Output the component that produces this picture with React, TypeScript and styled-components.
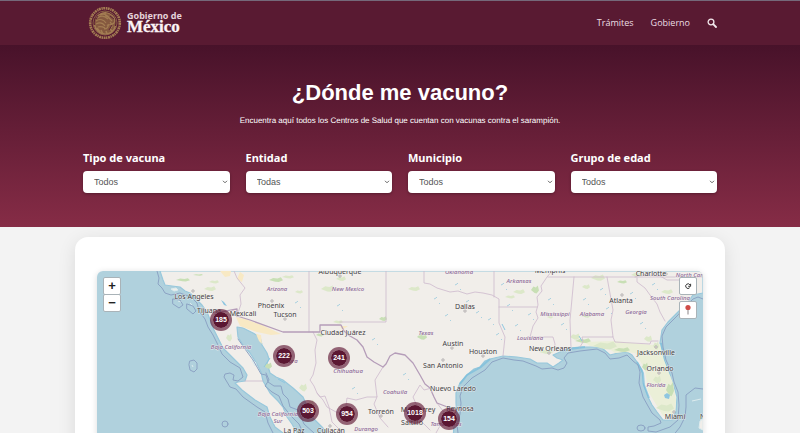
import React from "react";
import styled, { createGlobalStyle } from "styled-components";

const GlobalStyle = createGlobalStyle`
  * { box-sizing: border-box; }
  body {
    margin: 0;
    background: #f3f3f3;
    font-family: "Liberation Sans", Arial, sans-serif;
  }
`;

const Header = styled.header`
  display: flex;
  align-items: center;
  justify-content: space-between;
  height: 45px;
  padding: 0 83px 0 88px;
  background: #591a32;
  border-top: 1px solid #75697a;
`;

const Brand = styled.a`
  display: flex;
  align-items: center;
  gap: 5px;
  color: #fbf3f5;
  text-decoration: none;
`;

const BrandText = styled.span`
  display: flex;
  flex-direction: column;
`;

const BrandTop = styled.span`
  font: 700 9px/8px "Noto Sans", sans-serif;
  color: #e5d3da;
`;

const BrandName = styled.span`
  font: 700 17px/14px "Liberation Serif", serif;
  -webkit-text-stroke: 0.3px currentColor;
`;

const Nav = styled.nav`
  display: flex;
  align-items: center;
  gap: 17px;
`;

const NavLink = styled.a`
  font: 400 9px/14px "Open Sans", "Noto Sans", sans-serif;
  color: #ecdfe4;
  text-decoration: none;
`;

const SearchButton = styled.button`
  display: flex;
  padding: 0;
  border: 0;
  background: none;
  color: #f3e9ed;
`;

const Hero = styled.section`
  height: 182px;
  padding: 33px 83px 0;
  background: linear-gradient(#48122a, #862c46);
  color: #fff;
  text-align: center;
`;

const Title = styled.h1`
  margin: 0;
  font-size: 22px;
  line-height: 30px;
`;

const Lead = styled.p`
  margin: 7px 0 23px;
  font-size: 8px;
  line-height: 12px;
  text-rendering: geometricPrecision;
`;

const Filters = styled.form`
  display: grid;
  grid-template-columns: repeat(4, 1fr);
  gap: 16px;
  text-align: left;
`;

const Field = styled.div`
  display: flex;
  flex-direction: column;
  gap: 5px;
`;

const FieldLabel = styled.label`
  font: 700 11px/16px "Noto Sans", sans-serif;
`;

const SelectBox = styled.div`
  display: grid;
  align-items: center;

  > * { grid-area: 1 / 1; }
  > svg {
    justify-self: end;
    margin-right: 2px;
    pointer-events: none;
  }
`;

const Select = styled.select`
  appearance: none;
  width: 100%;
  height: 22px;
  padding: 0 11px;
  border: 0;
  border-radius: 4px;
  background: #fff;
  color: #555;
  font: 400 9px/12px "Liberation Sans", Arial, sans-serif;
  box-shadow: 0 1px 3px rgba(0, 0, 0, 0.3);
`;

const Card = styled.main`
  margin: 10px 75px 24px;
  padding: 34px 22px 22px;
  border-radius: 13px;
  background: #fff;
  box-shadow: 0 4px 18px rgba(0, 0, 0, 0.1);
`;

const MapFrame = styled.div`
  position: relative;
  overflow: hidden;
  border-radius: 6px;
  box-shadow: 0 1px 6px rgba(0, 0, 0, 0.14);

  > svg {
    display: block;
    width: 100%;
    height: auto;
  }
`;

const Cluster = styled.button<{ $x: number; $y: number }>`
  position: absolute;
  left: ${(p) => ((p.$x - 97) / 606) * 100}%;
  top: ${(p) => ((p.$y - 271) / 260) * 100}%;
  width: 22px;
  height: 22px;
  padding: 0;
  transform: translate(-50%, -50%);
  border: 3px solid rgba(97, 24, 54, 0.65);
  border-radius: 50%;
  background: #5b1732;
  background-clip: padding-box;
  color: #fff;
  font: 700 7px/16px "Liberation Sans", Arial, sans-serif;
  white-space: nowrap;
`;

const Controls = styled.div<{ $side: "left" | "right"; $gap: number }>`
  position: absolute;
  top: 6px;
  ${(p) => p.$side}: 6px;
  display: flex;
  flex-direction: column;
  gap: ${(p) => p.$gap}px;
`;

const ControlButton = styled.button`
  display: flex;
  align-items: center;
  justify-content: center;
  width: 18px;
  height: 18px;
  padding: 0;
  border: 1px solid #a9b3b8;
  border-radius: 2px;
  background: #fff;
  color: #222;
  font: 700 13px/16px "Liberation Sans", Arial, sans-serif;

  ${Controls} > & + &[data-joined] { margin-top: -1px; }
`;

const Seal = () => (
  <svg width="34" height="34" viewBox="0 0 34 34" fill="none" stroke="#a37d53" aria-hidden="true">
    <circle cx="17" cy="17" r="14.800" strokeWidth="2.600" strokeDasharray="2 .7 1.3 .5" />
    <circle cx="17" cy="17" r="12" strokeWidth="1" stroke="#8a6046" />
    <circle cx="17" cy="17" r="10.500" fill="#85593f" stroke="none" />
    <path d="M8 12c3-5 9-7 14-4 4 2 6 6 4 9-2 2-5 1-7 3M9 12c4-3 8-2 11 1M8 15c4-3 8-1 10 2M8 18c4-2 7-1 9 2M10 21c3-1 5 0 7 1M12 9c4-2 8 0 10 4M18 6c-2 2-1 4 2 5l4 4M22 16c2 2 3 4 1 6M20 18c1 3-1 5-4 5" strokeWidth="1.200" />
    <path d="M6.500 19c1 5 5 9 10.500 9s9-3 10.500-8M9 22l3 4M13 24l2 4M18 25l1 3M22 23l2 2" strokeWidth="1.600" />
    <path d="M22 10l4 3M10 10l-2 3M24 19l-3 5" stroke="#5e2438" strokeWidth="1" />
  </svg>
);

const landMain =
  "M160 271L163 280 165 285 172 286 180 287 185 291 190 293 195 298 202 305 207 312 211 322 214 330 218 338 223 348 230 355 237 362 243 368 247 375 245 381 238 382 235 383 242 390 255 400 267 407 270 417 275 427 283 433 290 445 300 455 306 448 302 438 297 433 292 424 287 417 283 407 278 401 270 393 263 381 261 372 257 364 250 353 243 345 238 337 237 327 243 328 253 333 260 337 262 345 267 353 269 359 267 363 270 373 276 377 283 380 293 388 303 397 308 408 312 417 322 427 327 433 345 455 370 490 400 531H480L462 480 453 440 454 425 457 417 456 403 456 393 460 383 467 375 474 369 480 367 485 361 490 359 503 356 517 357 530 359 537 363 547 363 553 367 559 363 563 360 557 358 553 355 560 352 570 348 580 347 597 347 602 348 610 355 618 353 627 352 632 355 637 362 642 370 643 383 648 397 652 405 657 412 663 420 672 420 676 412 677 397 674 386 670 377 667 368 663 360 660 343 662 330 668 322 677 313 687 303 693 295 703 293V271Z";

const offshore = [
  "M157 271L159 278 158 284 162 288 165 293 171 295 180 293 191 297 197 303 199 311 205 319 208 327 213 335 218 345 222 354 230 362 240 368 243 377 238 381 233 380 234 375 230 373 225 374 224 377 230 387 236 389 243 397 257 407 265 412 268 423 273 433 280 445 300 465",
  "M458 433L457 425 460 414 461 403 460 396 463 387 472 378 485 370 492 362 503 358 514 360 523 361 536 366 542 369 552 368 558 370 564 368 567 363 564 358 568 353 580 351 597 349 605 353 610 359 619 358 627 355 633 361 638 365 640 372 639 383 643 397 648 406 652 413 660 420 661 423 654 426 648 427 648 431 656 432 670 427 678 420 679 405 678 392 674 382 672 373 666 360 663 347 662 336 666 327 677 316 687 305 693 299 698 297 703 299",
  "M703 389L695 388 686 395 686 407 685 417 680 427 672 437",
  "M238 339L245 349 253 360 261 374 266 375 268 382 274 386 281 386 283 394 288 399 290 407 298 410 304 424 314 433",
  "M266 373L269 380 265 386 272 392 279 396 283 406 291 416 299 424 306 439",
];

const stateLines = [
  "M309 271V332",
  "M386 271V322H340",
  "M234 271L237 278 245 288 240 295 241 304 237 316",
  "M424 271V283L430 284 437 288 450 292 458 291 467 294 475 292 483 293 492 295 499 299V323L505 337 503 356",
  "M494 271V297",
  "M499 307H537",
  "M552 271L547 277 541 286 542 291 537 297 538 305 536 312 538 318 533 326 530 337H553L555 344 554 351",
  "M548 277H703",
  "M574 277L570 320 571 348",
  "M607 277L613 310 611 320 613 337H582L583 342 580 347",
  "M613 337L615 342 650 344 651 341 658 341",
  "M637 278L637 282 645 288 650 295 657 304 660 312 665 321",
  "M635 277L647 275 660 276 667 280 680 280 690 290",
  "M313 332L317 340 315 350 316 363 313 375 310 380 314 386 317 393 323 400 327 407 336 412 345 413 347 398 356 400 367 397 377 397 375 380 383 367",
  "M432 388L424 390 420 385 413 397 417 406 414 411 417 417 430 430",
  "M317 393L320 397 325 396 329 407 332 422 343 433",
  "M377 397L374 404 380 418 388 427",
  "M437 403L446 415 436 433",
  "M245 381H263",
];

const greenAreas = [
  [183, 280, 7, 2], [210, 289, 6, 3], [214, 282, 5, 2], [198, 275, 5, 1], [202, 295, 4, 1],
  [229, 338, 3, 5], [268, 366, 4, 4], [328, 289, 7, 4], [341, 279, 5, 3], [276, 280, 7, 3],
  [288, 277, 6, 2], [299, 292, 4, 2], [383, 319, 4, 3], [338, 322, 5, 2], [414, 289, 6, 3],
  [422, 337, 5, 4], [519, 292, 6, 3], [510, 297, 5, 2], [535, 290, 4, 5], [546, 352, 7, 3],
  [575, 337, 5, 4], [583, 341, 8, 3], [598, 278, 7, 4], [586, 287, 4, 3], [622, 282, 5, 2],
  [637, 275, 6, 3], [605, 346, 12, 5], [622, 350, 8, 3], [648, 339, 4, 4], [656, 346, 3, 5],
  [645, 367, 3, 5], [657, 380, 4, 5], [665, 408, 9, 5], [670, 390, 4, 9], [303, 388, 4, 5],
  [311, 404, 3, 5], [586, 316, 5, 2], [550, 317, 3, 2], [667, 292, 6, 3], [320, 335, 4, 2],
];

const cityLabels: [string, number, number][] = [
  ["Los Angeles", 194, 299], ["Tijuana", 209, 313], ["Mexicali", 243, 316], ["Phoenix", 271, 308],
  ["Tucson", 285, 317], ["Albuquerque", 340, 274], ["Ciudad Juárez", 343, 335], ["Dallas", 465, 309],
  ["Austin", 453, 346], ["Houston", 483, 354], ["San Antonio", 443, 368], ["New Orleans", 550, 351],
  ["Nuevo Laredo", 453, 391], ["Reynosa", 460, 411], ["Torreón", 381, 414], ["Monterrey", 418, 412],
  ["Saltillo", 412, 425], ["La Paz", 294, 433], ["Culiacán", 331, 433], ["Memphis", 550, 273],
  ["Charlotte", 651, 276], ["Atlanta", 621, 303], ["Jacksonville", 656, 355], ["Orlando", 660, 371],
  ["Miami", 675, 419], ["Nassau", 712, 419],
];

const stateLabels: [string, number, number][] = [
  ["Arizona", 277, 291], ["New Mexico", 348, 291], ["Oklahoma", 459, 274], ["Arkansas", 519, 283],
  ["Mississippi", 555, 316], ["Alabama", 592, 316], ["Georgia", 636, 314], ["South Carolina", 670, 300],
  ["North Carolina", 696, 277], ["Louisiana", 530, 340], ["Texas", 426, 335], ["Florida", 656, 387],
  ["Baja California", 231, 349], ["Sonora", 288, 363], ["Chihuahua", 348, 373], ["Coahuila", 395, 394],
  ["Durango", 366, 431], ["Baja California", 278, 416], ["Sur", 278, 423], ["Tamaulipas", 446, 426],
];

const cityDots = [
  [193, 291], [272, 301], [285, 319], [340, 276], [465, 311], [452, 348], [483, 356],
  [443, 360], [549, 353], [622, 295], [656, 347], [659, 373], [674, 412], [666, 274], [381, 416], [330, 426],
];

const ponds = [
  [501, 285], [488, 320], [496, 335], [476, 313], [466, 302], [507, 306], [515, 326], [548, 300],
  [600, 290], [606, 309], [630, 294], [445, 316], [434, 299], [652, 285], [372, 340], [337, 306],
  [295, 303], [352, 389], [403, 375], [561, 325], [640, 324], [583, 300], [528, 315], [455, 285],
];

const BaseMap = () => (
  <svg viewBox="97 271 606 260" role="img" aria-label="Mapa de Centros de Salud">
    <rect x="97" y="271" width="606" height="260" fill="#b0d1dd" />
    <path d={landMain} fill="#f1eeea" stroke="#98c8dc" strokeWidth="1.200" strokeLinejoin="round" />
    <path d="M460 384l7-9 14-8 9-8M562 351l8-2 15-2M637 362l6 11 1 12 5 13M661 343l3 17 6 16" fill="none" stroke="#79bddb" strokeWidth="2" opacity=".7" />
    <path d="M584 342l30-1 38 4 8-1 4 16 9 23 3 17-1 11-5 6-7-1-15-25-3-22-10-16-10-1-10 1-7-5-10-1-8-1z" fill="#ebefd8" />
    <path d="M236 317l9 2 17 6 19 9-10 1-14-3-17-6z M220 271l5 6 5-1 1-5zM240 272l-3 7 5 3 2-7zM256 334l5 1 1 9-3-3z M340 326h8l-6 4z" fill="#f8e9c4" />
    {greenAreas.map(([x, y, w, h], i) => (
      <path
        key={i}
        d={`M${x - w} ${y}l${w * 0.6} ${-h * 0.7} ${w * 0.6} ${h * 0.2} ${w * 0.5} ${-h * 0.4} ${w * 0.3} ${h} ${-w * 0.6} ${h * 0.6} ${-w * 0.5} ${-h * 0.1}z`}
        fill={i % 3 === 0 ? "#c8dfb5" : "#dce8c9"}
      />
    ))}
    {ponds.map(([x, y], i) => (
      <path key={i} d={`M${x} ${y}l2-1 1-1M${x + 5} ${y + 5}l1-1`} fill="none" stroke="#a9d1e0" strokeWidth="1" />
    ))}
    <path d="M221 300l3 2 3 4-3-1zM664 395l3-2 3 2-1 4-4-1z" fill="#8ec6e0" />
    <path d="M502 324l3 6M582 341l-3-5M270 358l-6 9M278 379l7 4" stroke="#8ec6e0" fill="none" />
    <path d="M253 360l3 3-1 3-3-5zM171 289l5-1 2 2-4 1zM190 303l3 3M178 301l4 1M192 365l1 2M692 401l9-2M700 421l3-2v11l-4-2z" fill="#f1eeea" stroke="#ddebed" />
    <g fill="none" strokeLinejoin="round" strokeLinecap="round">
      {stateLines.map((d) => <path key={d} d={d} stroke="#cdb9cd" strokeWidth="0.800" />)}
      {offshore.map((d) => <path key={d} d={d} stroke="#8ca3c4" strokeWidth="1" />)}
      <path d="M190 361l4-1 3 3v6l-3 3-4-2-1-5zM173 299l7 1 3 5-4 3-6-4zM187 304l6 2 3 5-3 3-6-5z" stroke="#8ca3c4" />
      <circle cx="225" cy="424" r="3" stroke="#8ca3c4" />
      <ellipse cx="641" cy="428" rx="4" ry="3" stroke="#8ca3c4" />
      <path d="M216 313L237 309 237 316 250 320 283 332H320V325H341L344 331 350 336 357 340 363 347 367 357 374 362 383 367 386 364 390 356 395 353 405 355 413 363 420 375 425 384 430 388 434 397 437 403 450 408 460 409" stroke="#b59db9" strokeWidth="1.300" />
    </g>
    <g fill="#f5f2ef" stroke="#8d888c" strokeWidth="0.600">
      {cityDots.map(([x, y]) => <circle key={`${x}-${y}`} cx={x} cy={y} r="1.200" />)}
    </g>
    <g fontFamily="Noto Sans, sans-serif" textAnchor="middle" stroke="#f6f3f0" strokeOpacity=".75" strokeWidth="1" paintOrder="stroke">
      <g fontSize="6" fontStyle="italic" fontWeight="500" fill="#8d6a98">
        {stateLabels.map(([name, x, y]) => <text key={`${name}-${y}`} x={x} y={y}>{name}</text>)}
      </g>
      <g fontSize="7" fill="#424044">
        {cityLabels.map(([name, x, y]) => <text key={name} x={x} y={y}>{name}</text>)}
      </g>
    </g>
  </svg>
);

const filters = [
  { id: "vacuna", label: "Tipo de vacuna", value: "Todos" },
  { id: "entidad", label: "Entidad", value: "Todas" },
  { id: "municipio", label: "Municipio", value: "Todos" },
  { id: "edad", label: "Grupo de edad", value: "Todos" },
];

const clusters = [
  { count: 185, x: 221, y: 320 },
  { count: 222, x: 284, y: 356 },
  { count: 241, x: 339, y: 358 },
  { count: 503, x: 308, y: 411 },
  { count: 954, x: 347, y: 414 },
  { count: 1018, x: 415, y: 413 },
  { count: 154, x: 449, y: 419 },
];

export default function App() {
  return (
    <>
      <GlobalStyle />
      <Header>
        <Brand href="#">
          <Seal />
          <BrandText>
            <BrandTop>Gobierno de</BrandTop>
            <BrandName>México</BrandName>
          </BrandText>
        </Brand>
        <Nav>
          <NavLink href="#tramites">Trámites</NavLink>
          <NavLink href="#gobierno">Gobierno</NavLink>
          <SearchButton aria-label="Buscar">
            <svg width="10" height="10" viewBox="0 0 10 10" fill="none" stroke="currentColor">
              <circle cx="4" cy="4" r="2.900" strokeWidth="1.300" />
              <path d="M6.200 6.200L9 9" strokeWidth="1.800" strokeLinecap="round" />
            </svg>
          </SearchButton>
        </Nav>
      </Header>
      <Hero>
        <Title>¿Dónde me vacuno?</Title>
        <Lead>Encuentra aquí todos los Centros de Salud que cuentan con vacunas contra el sarampión.</Lead>
        <Filters>
          {filters.map((f) => (
            <Field key={f.id}>
              <FieldLabel htmlFor={f.id}>{f.label}</FieldLabel>
              <SelectBox>
                <Select id={f.id}>
                  <option>{f.value}</option>
                </Select>
                <svg width="6" height="4" viewBox="0 0 6 4" fill="none" stroke="#666" aria-hidden="true">
                  <path d="M1 .8l2 2 2-2" />
                </svg>
              </SelectBox>
            </Field>
          ))}
        </Filters>
      </Hero>
      <Card>
        <MapFrame>
          <BaseMap />
          {clusters.map((c) => (
            <Cluster key={c.count} $x={c.x} $y={c.y}>{c.count}</Cluster>
          ))}
          <Controls $side="left" $gap={0}>
            <ControlButton aria-label="Acercar">+</ControlButton>
            <ControlButton aria-label="Alejar" data-joined>−</ControlButton>
          </Controls>
          <Controls $side="right" $gap={6}>
            <ControlButton aria-label="Recargar">
              <svg width="8" height="8" viewBox="0 0 8 8" fill="none" stroke="#333" strokeWidth="1">
                <path d="M5.700 5.700A2.300 2.300 0 1 1 6 3M6.600 1.800V4.300H4.200" />
              </svg>
            </ControlButton>
            <ControlButton aria-label="Mi ubicación">
              <svg width="8" height="12" viewBox="0 0 8 12">
                <path d="M4 5v5.500" stroke="#8b8587" strokeWidth="1" />
                <circle cx="4" cy="3.500" r="2.600" fill="#cf4d48" />
              </svg>
            </ControlButton>
          </Controls>
        </MapFrame>
      </Card>
    </>
  );
}
